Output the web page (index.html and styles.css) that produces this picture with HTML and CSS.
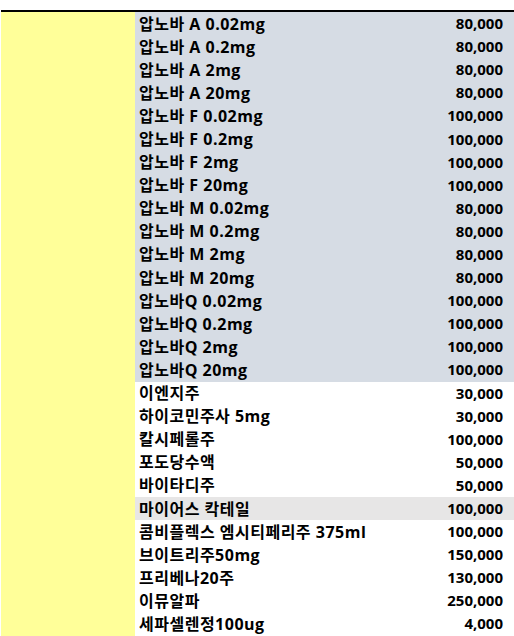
FILE: index.html
```html
<!DOCTYPE html>
<html lang="ko">
<head>
<meta charset="utf-8">
<link rel="stylesheet" href="styles.css">
</head>
<body>
<div class="sheet">
  <div class="side"></div>
  <div class="list">
    <div class="row blue"><span class="name">압노바 A 0.02mg</span><span class="price">80,000</span></div>
    <div class="row blue"><span class="name">압노바 A 0.2mg</span><span class="price">80,000</span></div>
    <div class="row blue"><span class="name">압노바 A 2mg</span><span class="price">80,000</span></div>
    <div class="row blue"><span class="name">압노바 A 20mg</span><span class="price">80,000</span></div>
    <div class="row blue"><span class="name">압노바 F 0.02mg</span><span class="price">100,000</span></div>
    <div class="row blue"><span class="name">압노바 F 0.2mg</span><span class="price">100,000</span></div>
    <div class="row blue"><span class="name">압노바 F 2mg</span><span class="price">100,000</span></div>
    <div class="row blue"><span class="name">압노바 F 20mg</span><span class="price">100,000</span></div>
    <div class="row blue"><span class="name">압노바 M 0.02mg</span><span class="price">80,000</span></div>
    <div class="row blue"><span class="name">압노바 M 0.2mg</span><span class="price">80,000</span></div>
    <div class="row blue"><span class="name">압노바 M 2mg</span><span class="price">80,000</span></div>
    <div class="row blue"><span class="name">압노바 M 20mg</span><span class="price">80,000</span></div>
    <div class="row blue"><span class="name">압노바Q 0.02mg</span><span class="price">100,000</span></div>
    <div class="row blue"><span class="name">압노바Q 0.2mg</span><span class="price">100,000</span></div>
    <div class="row blue"><span class="name">압노바Q 2mg</span><span class="price">100,000</span></div>
    <div class="row blue"><span class="name">압노바Q 20mg</span><span class="price">100,000</span></div>
    <div class="row"><span class="name">이엔지주</span><span class="price">30,000</span></div>
    <div class="row"><span class="name">하이코민주사 5mg</span><span class="price">30,000</span></div>
    <div class="row"><span class="name">칼시페롤주</span><span class="price">100,000</span></div>
    <div class="row"><span class="name">포도당수액</span><span class="price">50,000</span></div>
    <div class="row"><span class="name">바이타디주</span><span class="price">50,000</span></div>
    <div class="row grey"><span class="name">마이어스 칵테일</span><span class="price">100,000</span></div>
    <div class="row"><span class="name">콤비플렉스 엠시티페리주 375ml</span><span class="price">100,000</span></div>
    <div class="row"><span class="name">브이트리주50mg</span><span class="price">150,000</span></div>
    <div class="row"><span class="name">프리베나20주</span><span class="price">130,000</span></div>
    <div class="row"><span class="name">이뮤알파</span><span class="price">250,000</span></div>
    <div class="row"><span class="name">세파셀렌정100ug</span><span class="price">4,000</span></div>
  </div>
</div>
</body>
</html>
```

FILE: styles.css
```css
html, body {
  margin: 0;
  padding: 0;
  background: #ffffff;
  overflow: hidden;
}
body {
  padding: 10px 0 0 1px;
  font-family: "Open Sans", "Noto Sans CJK KR", sans-serif;
  font-weight: 700;
  font-size: 15px;
  color: #000;
}
.sheet {
  display: flex;
  border-top: 2px solid #000;
}
.side {
  width: 134px;
  flex: none;
  background: #ffff99;
}
.list {
  flex: 1;
  display: flex;
  flex-direction: column;
}
.row {
  height: 23.1px;
  display: flex;
  align-items: center;
  justify-content: space-between;
  padding: 0 11px 0 4px;
  line-height: 1;
  white-space: nowrap;
}
.name {
  font-size: 16px;
  letter-spacing: 0.5px;
}
.row.blue { background: #d6dce4; }
.row.grey { background: #e7e6e6; }
```
